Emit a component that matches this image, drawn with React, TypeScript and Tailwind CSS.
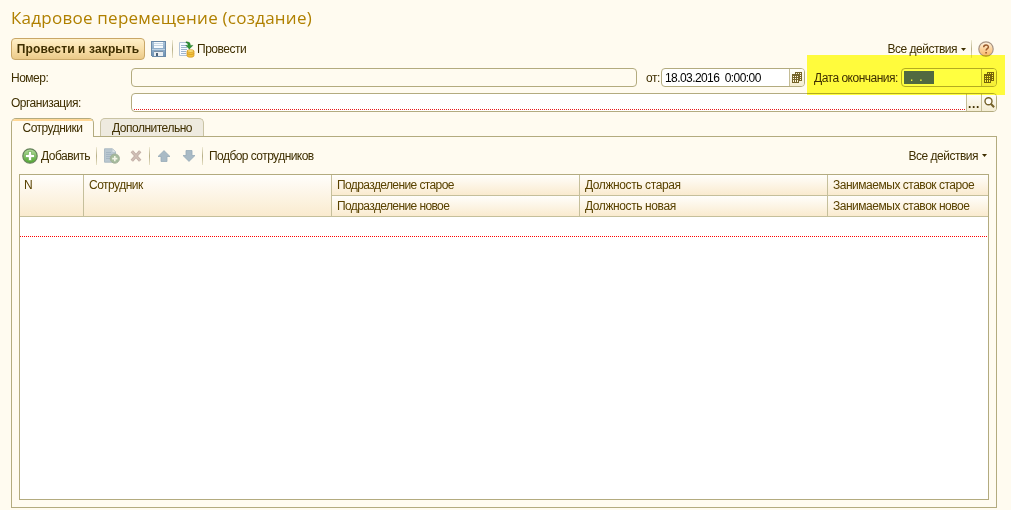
import type { ReactNode } from "react";

function Separator() {
  return <span className="h-[18px] w-px shrink-0 bg-gradient-to-b from-[#f0ebd6] via-[#b8b088] to-[#e8e2c8]" />;
}

function SaveIcon() {
  return (
    <svg width="16" height="16" viewBox="0 0 16 16" className="shrink-0" shapeRendering="crispEdges">
      <defs>
        <linearGradient id="disk" x2="0" y2="1">
          <stop stopColor="#a9c3da" />
          <stop offset="1" stopColor="#6f93b5" />
        </linearGradient>
      </defs>
      <path d="M.5.5h14v15H1.500l-1-1z" fill="url(#disk)" stroke="#6b8aa8" />
      <path d="M3 1h9v6H3z" fill="#f6fafd" />
      <path d="M3 2h9v1H3zM3 4h9v1H3z" fill="#c6d6e3" />
      <path d="M1 8h13v1H1z" fill="#bdd1e2" />
      <path d="M3 10h9v5H3z" fill="#e9eef2" />
      <path d="M3 10h9v1H3z" fill="#7c90a5" />
      <path d="M5 12h2v3H5z" fill="#4d6278" />
    </svg>
  );
}

function PostIcon() {
  return (
    <svg width="16" height="17" viewBox="0 0 16 17" className="shrink-0">
      <path d="M.5 1.500h10v13H.5z" fill="#f8fbff" stroke="#b3c3d6" />
      <path d="M2 4.500h6M2 6.500h6M2 8.500h6M2 10.500h5M2 12.500h5" stroke="#9db4cd" />
      <path d="M7 .8c3 0 4.300 1 4.400 3.600h2.500L10.300 8 6.800 4.400h2.200C8.800 2.500 8.600 2 7 1.800z" fill="#2f9434" stroke="#146618" strokeWidth=".4" />
      <path d="M8 10v4.700c0 2 7 2 7 0V10z" fill="#f3c23c" stroke="#cf9420" strokeWidth=".7" />
      <ellipse cx="11.500" cy="10" rx="3.500" ry="1.300" fill="#ffe680" stroke="#cf9420" strokeWidth=".7" />
      <path d="M8 12.300c0 1.600 7 1.600 7 0" fill="none" stroke="#cf9420" strokeWidth=".7" />
    </svg>
  );
}

function HelpIcon() {
  return (
    <svg width="16" height="16" viewBox="0 0 16 16" className="shrink-0">
      <defs>
        <linearGradient id="help" x2="0" y2="1">
          <stop stopColor="#fff6e6" />
          <stop offset=".5" stopColor="#fcd29c" />
          <stop offset="1" stopColor="#f9b568" />
        </linearGradient>
      </defs>
      <circle cx="8" cy="8" r="7.200" fill="url(#help)" stroke="#a89484" strokeWidth="1.200" />
      <path d="M5.700 6.200C5.700 3.200 10.500 3.300 10.400 6c0 1.700-2.300 1.700-2.300 3.600" fill="none" stroke="#9a5a2c" strokeWidth="1.500" />
      <path d="M7.300 11h1.600v1.500H7.300z" fill="#9a5a2c" />
    </svg>
  );
}

function CalendarIcon() {
  return (
    <svg width="10" height="11" viewBox="0 0 10 11" shapeRendering="crispEdges">
      <path d="M3 0h7v9H7v2H0V2h3z" fill="#75632a" />
      <path d="M4 1h1v1H4zM6 1h1v1H6zM8 1h1v1H8zM1 4h1v1H1zM3 4h1v1H3zM5 4h1v1H5zM1 6h1v1H1zM3 6h1v1H3zM5 6h1v1H5zM1 8h1v2H1zM3 8h1v2H3zM5 8h1v2H5zM8 3h1v1H8zM8 5h1v1H8zM8 7h1v1H8z" fill="#fff8dc" />
    </svg>
  );
}

function SearchIcon() {
  return (
    <svg width="11" height="11" viewBox="0 0 11 11">
      <circle cx="4.500" cy="4.300" r="3.500" fill="#fffdf5" stroke="#75622b" strokeWidth="1.400" />
      <path d="M6.800 6.700l3.300 3.500" stroke="#75622b" strokeWidth="2" />
    </svg>
  );
}

function AddIcon() {
  return (
    <svg width="16" height="16" viewBox="0 0 16 16" className="shrink-0">
      <defs>
        <linearGradient id="add" x2="0" y2="1">
          <stop stopColor="#b5dca0" />
          <stop offset="1" stopColor="#4da62b" />
        </linearGradient>
      </defs>
      <circle cx="8" cy="8" r="7.200" fill="url(#add)" stroke="#66825b" strokeWidth="1.200" />
      <path d="M6.500 3.500h3v3h3v3h-3v3h-3v-3h-3v-3h3z" fill="#fff" stroke="#62a447" strokeWidth=".6" />
    </svg>
  );
}

function CopyIcon() {
  return (
    <svg width="16" height="16" viewBox="0 0 16 16" className="shrink-0">
      <path d="M.5.800h8l3 3v10.400H.5z" fill="#b9c7d0" stroke="#adbbc4" />
      <path d="M8.500 1v3h3" fill="#dce3e5" />
      <path d="M2 4.500h5M2 6.500h8M2 8.500h6M2 10.500h5" stroke="#a5b6c3" />
      <circle cx="10.800" cy="10.600" r="4.600" fill="#a5bb9c" stroke="#a2af99" />
      <path d="M10.800 8v5.200M8.200 10.600h5.200" stroke="#f2f4e6" strokeWidth="1.600" />
    </svg>
  );
}

function DeleteIcon() {
  return (
    <svg width="12" height="12" viewBox="0 0 12 12" className="shrink-0">
      <path d="M1.800 1.300l8.400 9.400M10.200 1.300L1.800 10.700" stroke="#bfaca3" strokeWidth="3.200" />
      <path d="M2 1.500l8 9M10 1.500l-8 9" stroke="#d0bfb6" strokeWidth="1.700" />
    </svg>
  );
}

function ArrowIcon({ down = false }: { down?: boolean }) {
  return (
    <svg width="14" height="12" viewBox="0 0 14 12" className={down ? "shrink-0 rotate-180" : "shrink-0"}>
      <path d="M7 .6L13 6.500H10V11.500H4V6.500H1z" fill="#a9bac5" stroke="#98abb8" strokeWidth=".8" />
    </svg>
  );
}

function AllActions() {
  return (
    <span className="flex items-center">
      <span className="tracking-[-0.5px]">Все действия</span>
      <svg width="5" height="3" viewBox="0 0 5 3" className="ml-[4px]">
        <path d="M0 0h5L2.500 3z" fill="#3f2f00" />
      </svg>
    </span>
  );
}

function Field({ className, children }: { className: string; children?: ReactNode }) {
  return (
    <div className={"flex h-[19px] shrink-0 overflow-hidden rounded-[4px] border border-[#b3ab7f] " + className}>{children}</div>
  );
}

function FieldButton({ children }: { children: ReactNode }) {
  return (
    <span className="flex w-[15px] shrink-0 items-center justify-center border-l border-[#c5bd96] bg-gradient-to-b from-[#fffefa] to-[#f4edd2]">
      {children}
    </span>
  );
}

function HeaderCell({ children }: { children: string }) {
  return (
    <div className="h-[21px] border-b border-[#c5bf9b] bg-gradient-to-b from-[#fffefb] to-[#faebcf] pl-[5px] leading-[20px] whitespace-nowrap">
      {children}
    </div>
  );
}

const columns = [
  { top: "Подразделение старое", bottom: "Подразделение новое", style: "w-[248px] border-r tracking-[-0.6px]" },
  { top: "Должность старая", bottom: "Должность новая", style: "w-[248px] border-r tracking-[-0.4px]" },
  { top: "Занимаемых ставок старое", bottom: "Занимаемых ставок новое", style: "flex-1 tracking-[-0.48px]" },
];

export default function App() {
  return (
    <main className="relative h-[510px] w-[1011px] overflow-hidden bg-[#fffbf0] pl-[11px] font-['Liberation_Sans',sans-serif] text-[12px] leading-[16px] tracking-[-0.5px] whitespace-nowrap text-[#3f2f00]">
      <h1 className="h-[38px] pt-[6px] font-['Open_Sans',sans-serif] text-[17px] leading-[24px] tracking-[0.24px] text-[#b08000]">
        Кадровое перемещение (создание)
      </h1>
      <div className="flex h-[22px] w-[986px] items-center">
        <button className="h-[22px] w-[134px] rounded-[4px] border border-[#c9a767] bg-gradient-to-b from-[#fff0c8] via-[#f8dfa9] to-[#ebca89] text-center font-bold tracking-[0.12px] text-[#3f2f00]">
          Провести и закрыть
        </button>
        <span className="ml-[6px] flex"><SaveIcon /></span>
        <span className="ml-[5px] flex"><Separator /></span>
        <span className="ml-[6px] flex"><PostIcon /></span>
        <span className="ml-[2px]">Провести</span>
        <span className="ml-auto"><AllActions /></span>
        <span className="mr-[6px] ml-[5px] flex"><Separator /></span>
        <span className="mr-[3px] flex"><HelpIcon /></span>
      </div>
      <div className="mt-[8px] flex h-[19px] w-[986px] items-center">
        <span className="w-[120px]">Номер:</span>
        <Field className="w-[506px]" />
        <span className="ml-[9px] w-[15px]">от:</span>
        <Field className="w-[144px] bg-white text-black">
          <span className="flex-1 pl-[3px] leading-[18px] tracking-[-0.58px] whitespace-pre">18.03.2016  0:00:00</span>
          <FieldButton><CalendarIcon /></FieldButton>
        </Field>
        <span className="ml-[9px] w-[87px]">Дата окончания:</span>
        <Field className="w-[96px] bg-white">
          <span className="mt-[2px] ml-[2px] h-[13px] w-[30px] bg-[#5169ff] pl-[6px] leading-[13px] tracking-[6px] text-[#ffffe0]">..</span>
          <span className="flex-1" />
          <FieldButton><CalendarIcon /></FieldButton>
        </Field>
      </div>
      <div className="mt-[6px] flex h-[19px] w-[986px] items-center">
        <span className="w-[120px]">Организация:</span>
        <Field className="w-[866px] bg-white">
          <span className="mb-px ml-[2px] h-px flex-1 self-end bg-[repeating-linear-gradient(90deg,#e81818_0px,#e81818_1px,#ffffff_1px,#ffffff_2px)]" />
          <FieldButton><span className="mt-[3px] font-bold tracking-[0.6px]">...</span></FieldButton>
          <FieldButton><SearchIcon /></FieldButton>
        </Field>
      </div>
      <nav className="mt-[6px] flex h-[18px] w-[986px]">
        <div className="relative z-10 h-[19px] w-[83px] overflow-hidden rounded-t-[5px] border border-b-0 border-[#b3ab7f] bg-[#fffbf0] text-center leading-[19px]">
          <div className="absolute top-0 h-[2px] w-full bg-[#ffd795]" />
          Сотрудники
        </div>
        <div className="ml-[6px] h-[18px] w-[104px] rounded-t-[5px] border border-b-0 border-[#c9c3a4] bg-[#eeeadf] text-center leading-[19px]">
          Дополнительно
        </div>
      </nav>
      <section className="flex h-[372px] w-[986px] flex-col border border-[#b3ab7f] px-[7px] pb-[7px]">
        <div className="flex h-[37px] shrink-0 items-center pr-[2px] pl-[3px]">
          <AddIcon />
          <span className="ml-[3px] w-[49px]">Добавить</span>
          <span className="ml-[6px] flex"><Separator /></span>
          <span className="ml-[7px] flex"><CopyIcon /></span>
          <span className="ml-[10px] flex"><DeleteIcon /></span>
          <span className="ml-[7px] flex"><Separator /></span>
          <span className="ml-[7px] flex"><ArrowIcon /></span>
          <span className="ml-[11px] flex"><ArrowIcon down /></span>
          <span className="ml-[6px] flex"><Separator /></span>
          <span className="ml-[6px] tracking-[-0.55px]">Подбор сотрудников</span>
          <span className="ml-auto"><AllActions /></span>
        </div>
        <div className="flex-1 border border-[#b3ab7f] bg-white">
          <div className="flex h-[42px] text-[#594200]">
            <div className="w-[64px] border-r border-b border-[#c5bf9b] bg-gradient-to-b from-[#fffefb] to-[#faebcf] pl-[4px] leading-[20px]">N</div>
            <div className="w-[248px] border-r border-b border-[#c5bf9b] bg-gradient-to-b from-[#fffefb] to-[#faebcf] pl-[5px] leading-[20px]">Сотрудник</div>
            {columns.map((column) => (
              <div key={column.top} className={"border-[#c5bf9b] " + column.style}>
                <HeaderCell>{column.top}</HeaderCell>
                <HeaderCell>{column.bottom}</HeaderCell>
              </div>
            ))}
          </div>
          <div className="mt-[19px] h-px bg-[repeating-linear-gradient(90deg,#ff0000_0px,#ff0000_1px,#ffffff_1px,#ffffff_2px)]" />
        </div>
      </section>
      <div className="pointer-events-none absolute top-[55px] left-[807px] h-[40px] w-[198px] bg-[#ffff40] mix-blend-multiply" />
    </main>
  );
}
